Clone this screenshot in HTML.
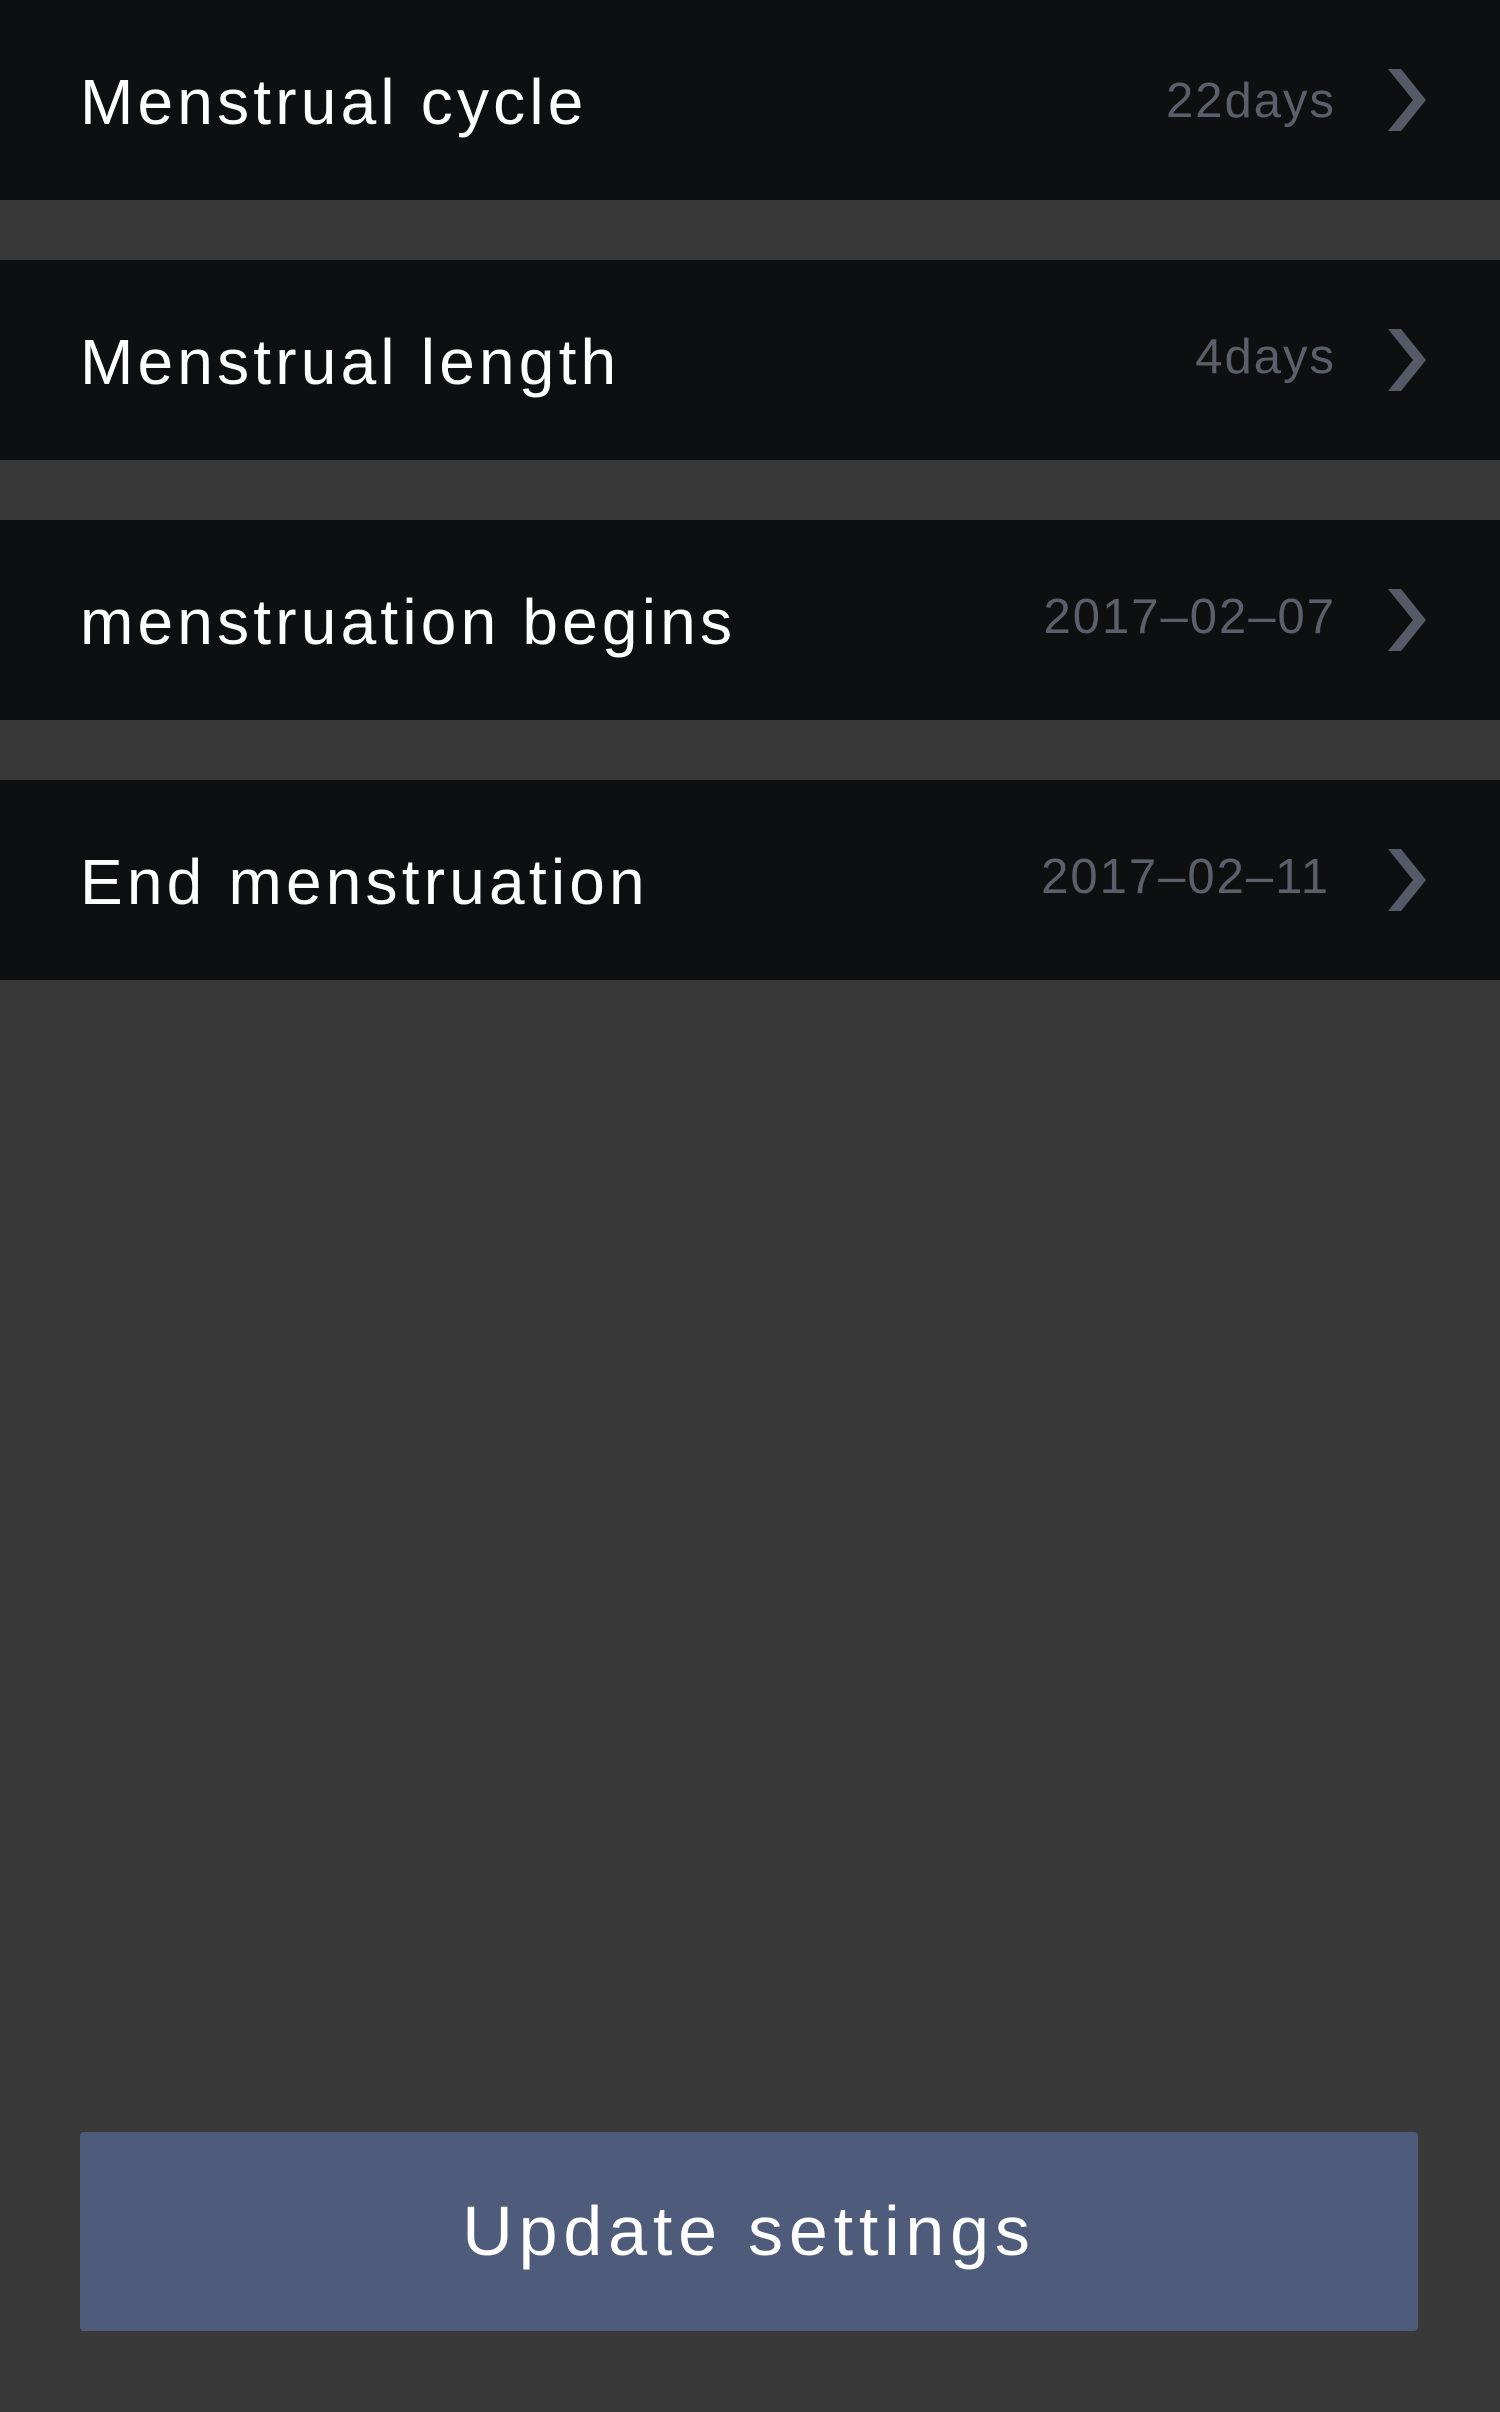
<!DOCTYPE html>
<html><head><style>
body{margin:0;width:1500px;height:2412px;background:#393939;font-family:"Liberation Sans",sans-serif;position:relative;overflow:hidden}
.row{position:absolute;left:0;width:1500px;height:200px;background:#0e0f11}
.lab{position:absolute;left:80px;top:2px;line-height:200px;font-size:64px;color:#fff;letter-spacing:4.2px}
.val{position:absolute;right:164px;top:0;line-height:200px;font-size:49px;color:#5b5f69;letter-spacing:2px}
.chev{position:absolute;left:1388px;top:69px;width:40px;height:62px}
.btn{position:absolute;left:80px;top:2132px;width:1338px;height:199px;background:#4e5b7a;border-radius:4px;color:#fff;font-size:70px;text-align:center;line-height:199px;letter-spacing:5.8px}
</style></head><body>
<div class="row" style="top:0"><div class="lab">Menstrual cycle</div><div class="val" style="top:1px">22days</div><svg class="chev" viewBox="0 0 40 62"><path d="M0 0H13L38 31L13 62H0L25 31Z" fill="#555a66"/></svg></div>
<div class="row" style="top:260px"><div class="lab">Menstrual length</div><div class="val" style="top:-3px">4days</div><svg class="chev" viewBox="0 0 40 62"><path d="M0 0H13L38 31L13 62H0L25 31Z" fill="#555a66"/></svg></div>
<div class="row" style="top:520px"><div class="lab">menstruation begins</div><div class="val" style="top:-3px">2017–02–07</div><svg class="chev" viewBox="0 0 40 62"><path d="M0 0H13L38 31L13 62H0L25 31Z" fill="#555a66"/></svg></div>
<div class="row" style="top:780px"><div class="lab">End menstruation</div><div class="val" style="top:-3px;right:170px">2017–02–11</div><svg class="chev" viewBox="0 0 40 62"><path d="M0 0H13L38 31L13 62H0L25 31Z" fill="#555a66"/></svg></div>
<div class="btn">Update settings</div>
</body></html>
